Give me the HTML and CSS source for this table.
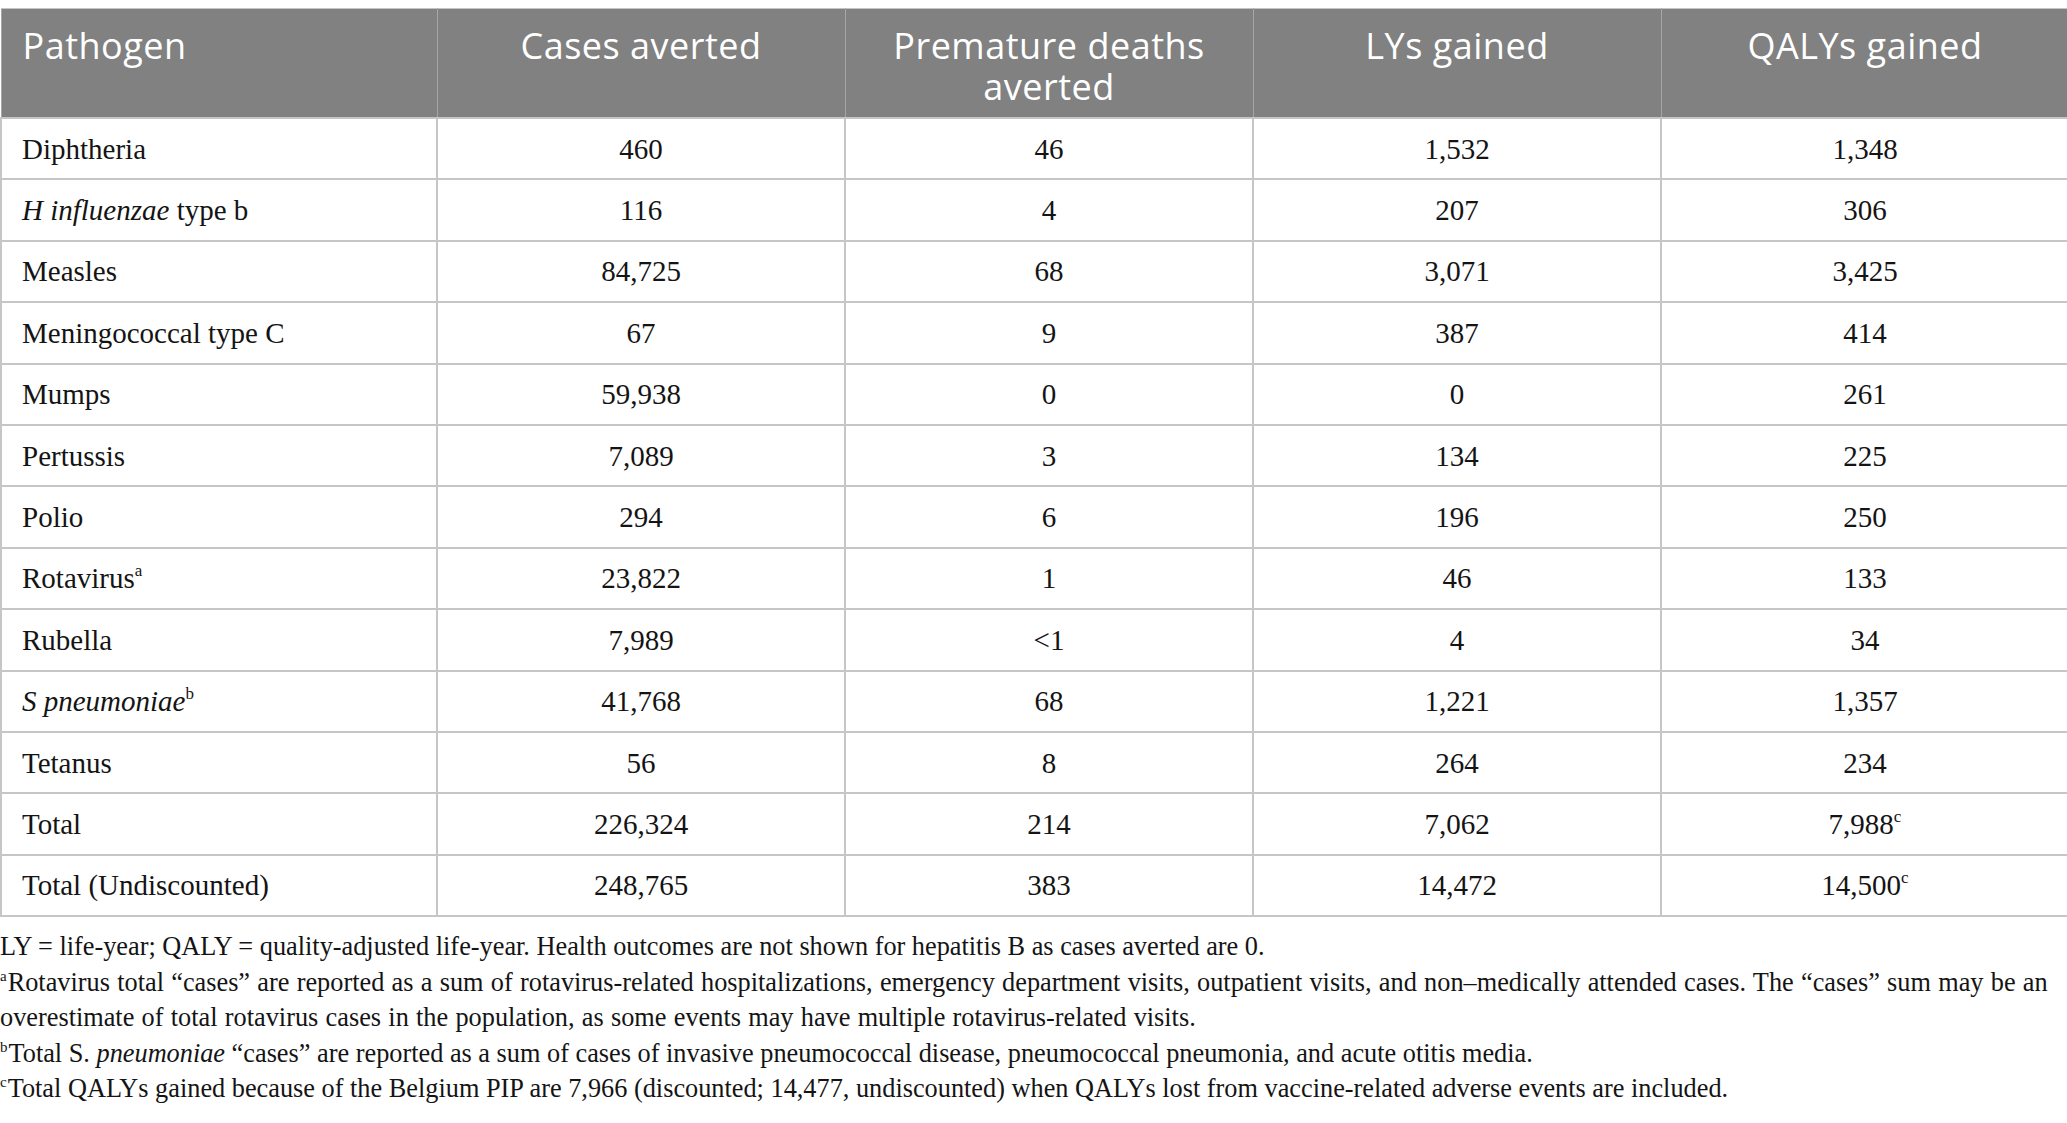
FILE: index.html
```html
<!DOCTYPE html>
<html lang="en">
<head>
<meta charset="utf-8">
<title>Health outcomes averted</title>
<link rel="stylesheet" href="styles.css">
</head>
<body>
<div class="page">
  <table class="outcomes">
    <colgroup>
      <col class="c-first">
      <col class="c-num">
      <col class="c-num">
      <col class="c-num">
      <col class="c-num">
    </colgroup>
    <thead>
      <tr>
        <th class="left">Pathogen</th>
        <th>Cases averted</th>
        <th>Premature deaths averted</th>
        <th>LYs gained</th>
        <th>QALYs gained</th>
      </tr>
    </thead>
    <tbody>
      <tr><td>Diphtheria</td><td>460</td><td>46</td><td>1,532</td><td>1,348</td></tr>
      <tr><td><i>H influenzae</i> type b</td><td>116</td><td>4</td><td>207</td><td>306</td></tr>
      <tr><td>Measles</td><td>84,725</td><td>68</td><td>3,071</td><td>3,425</td></tr>
      <tr><td>Meningococcal type C</td><td>67</td><td>9</td><td>387</td><td>414</td></tr>
      <tr><td>Mumps</td><td>59,938</td><td>0</td><td>0</td><td>261</td></tr>
      <tr><td>Pertussis</td><td>7,089</td><td>3</td><td>134</td><td>225</td></tr>
      <tr><td>Polio</td><td>294</td><td>6</td><td>196</td><td>250</td></tr>
      <tr><td>Rotavirus<sup>a</sup></td><td>23,822</td><td>1</td><td>46</td><td>133</td></tr>
      <tr><td>Rubella</td><td>7,989</td><td>&lt;1</td><td>4</td><td>34</td></tr>
      <tr><td><i>S pneumoniae</i><sup>b</sup></td><td>41,768</td><td>68</td><td>1,221</td><td>1,357</td></tr>
      <tr><td>Tetanus</td><td>56</td><td>8</td><td>264</td><td>234</td></tr>
      <tr><td>Total</td><td>226,324</td><td>214</td><td>7,062</td><td>7,988<sup>c</sup></td></tr>
      <tr><td>Total (Undiscounted)</td><td>248,765</td><td>383</td><td>14,472</td><td>14,500<sup>c</sup></td></tr>
    </tbody>
  </table>
  <div class="notes">
    <p>LY = life-year; QALY = quality-adjusted life-year. Health outcomes are not shown for hepatitis B as cases averted are 0.</p>
    <p class="wide"><sup>a</sup>Rotavirus total “cases” are reported as a sum of rotavirus-related hospitalizations, emergency department visits, outpatient visits, and non–medically attended cases. The “cases” sum may be an overestimate of total rotavirus cases in the population, as some events may have multiple rotavirus-related visits.</p>
    <p><sup>b</sup>Total S. <i>pneumoniae</i> “cases” are reported as a sum of cases of invasive pneumococcal disease, pneumococcal pneumonia, and acute otitis media.</p>
    <p><sup>c</sup>Total QALYs gained because of the Belgium PIP are 7,966 (discounted; 14,477, undiscounted) when QALYs lost from vaccine-related adverse events are included.</p>
  </div>
</div>
</body>
</html>
```
FILE: styles.css
```css
html, body {
  margin: 0;
  padding: 0;
  background: #ffffff;
}

.page {
  width: 2067px;
  padding-top: 8px;
}

.outcomes {
  width: 2067px;
  border-collapse: collapse;
  table-layout: fixed;
  font-family: "Liberation Serif", "Times New Roman", serif;
  color: #141414;
}

.c-first { width: 436px; }
.c-num { width: 408px; }

.outcomes thead th {
  background: #808180;
  color: #ffffff;
  font-family: "Open Sans", "Noto Sans", sans-serif;
  font-weight: 400;
  font-size: 36px;
  letter-spacing: 0.5px;
  line-height: 41px;
  text-align: center;
  vertical-align: top;
  padding: 16px 36px 10px 36px;
  border: 1px solid #a6a6a6;
  border-top-color: #c4c4c4;
}

.outcomes thead th.left {
  text-align: left;
  padding-left: 21px;
}

.outcomes tbody td {
  height: 59.4px;
  padding: 0 10px;
  font-size: 29px;
  line-height: 34px;
  text-align: center;
  vertical-align: middle;
  border: 2px solid #c6c6c6;
}

.outcomes tbody td:first-child {
  text-align: left;
  padding-left: 20px;
}

.outcomes sup {
  font-size: 17px;
  line-height: 0;
  vertical-align: 12px;
}

.notes {
  margin-top: 12px;
  font-family: "Liberation Serif", "Times New Roman", serif;
  font-size: 26.3px;
  line-height: 35.5px;
  color: #141414;
}

.notes p {
  margin: 0;
}

.notes p.wide {
  word-spacing: 0.7px;
}

.notes sup {
  font-size: 15px;
  line-height: 0;
  vertical-align: 10px;
  margin-right: 1px;
}
```
